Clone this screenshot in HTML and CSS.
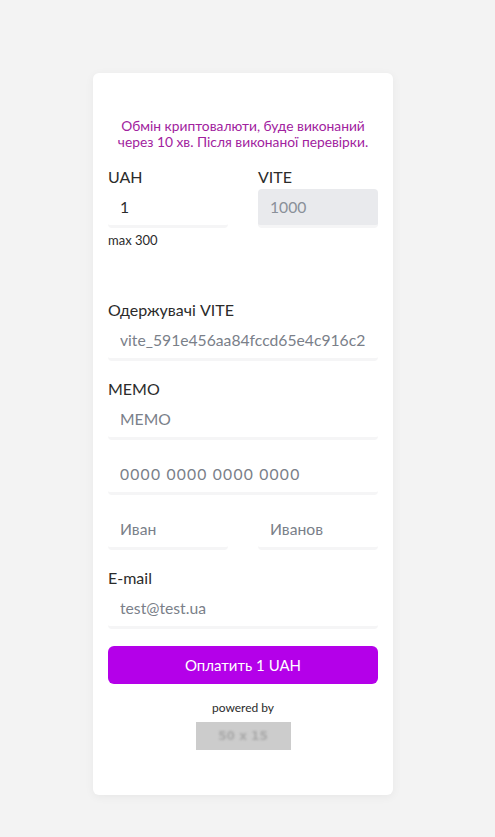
FILE: index.html
```html
<!DOCTYPE html>
<html lang="uk">
<head>
<meta charset="utf-8">
<title>Оплата</title>
<link rel="stylesheet" href="styles.css">
</head>
<body>
<main class="card">
  <p class="notice">Обмін криптовалюти, буде виконаний<br>через 10 хв. Після виконаної перевірки.</p>

  <div class="row first">
    <div class="col">
      <label class="label">UAH</label>
      <input class="input value" type="text" value="1">
      <div class="hint">max 300</div>
    </div>
    <div class="col">
      <label class="label">VITE</label>
      <input class="input disabled" type="text" placeholder="1000" disabled>
    </div>
  </div>

  <div class="group recv">
    <label class="label">Одержувачі VITE</label>
    <input class="input" type="text" placeholder="vite_591e456aa84fccd65e4c916c2">
  </div>

  <div class="group">
    <label class="label">MEMO</label>
    <input class="input" type="text" placeholder="MEMO">
  </div>

  <div class="group plain">
    <input class="input card-no" type="text" placeholder="0000 0000 0000 0000">
  </div>

  <div class="row plain">
    <div class="col"><input class="input" type="text" placeholder="Иван"></div>
    <div class="col"><input class="input" type="text" placeholder="Иванов"></div>
  </div>

  <div class="group">
    <label class="label">E-mail</label>
    <input class="input" type="text" placeholder="test@test.ua">
  </div>

  <button class="pay" type="button">Оплатить 1 UAH</button>

  <div class="powered">
    <span>powered by</span>
    <div class="logo"><span class="logo-text">50 x 15</span></div>
  </div>
</main>
</body>
</html>
```

FILE: styles.css
```css
* { box-sizing: border-box; }
html, body { margin: 0; padding: 0; }
body {
  background: #f3f3f3;
  font-family: "Lato", "Noto Sans", sans-serif;
  color: #2b2b2b;
  padding: 73px 9px 42px 0;
}
.card {
  width: 300px;
  margin: 0 auto;
  background: #fff;
  border-radius: 6px;
  box-shadow: 0 2px 10px rgba(0,0,0,0.05);
  padding: 45px 15px 45px;
  display: flex;
  flex-direction: column;
}
.notice {
  margin: 0;
  text-align: center;
  color: #a1229e;
  font-size: 13.8px;
  line-height: 16px;
}
.row {
  display: flex;
  gap: 30px;
}
.row.first { margin-top: 18px; }
.col { flex: 1; min-width: 0; display: flex; flex-direction: column; }
.label {
  display: block;
  font-size: 16px;
  line-height: 18px;
  color: #2b2b2b;
  margin-bottom: 3px;
}
.input {
  display: block;
  width: 100%;
  height: 39px;
  border: none;
  border-bottom: 3px solid #f5f5f6;
  border-radius: 4px;
  padding: 0 6px 0 12px;
  font-family: inherit;
  font-size: 15.7px;
  color: #2b2b2b;
  background: #fff;
  outline: none;
}
.input::placeholder { color: #7a8089; opacity: 1; }
.input.disabled { background: #e9eaed; }
.input.disabled::placeholder { color: #8a9099; }
.input.card-no { letter-spacing: 1.2px; }
.hint {
  font-size: 13px;
  line-height: 14px;
  margin-top: 5px;
}
.group { margin-top: 19px; }
.recv { margin-top: 54px; }
.plain { margin-top: 16px; }
.pay {
  margin-top: 17px;
  height: 38px;
  border: none;
  border-radius: 6px;
  background: #b400e9;
  color: #fff;
  font-family: inherit;
  font-size: 15px;
}
.powered {
  display: flex;
  flex-direction: column;
  align-items: center;
  margin-top: 17px;
  font-size: 12px;
  line-height: 14px;
  color: #2b2b2b;
}
.logo {
  margin-top: 7px;
  width: 95px;
  height: 28px;
  background: #cccccc;
  display: flex;
  align-items: center;
  justify-content: center;
}
.logo-text {
  color: #a9a9a9;
  font-size: 12px;
  font-weight: bold;
  font-family: "DejaVu Sans", sans-serif;
  filter: blur(0.8px);
}
```
